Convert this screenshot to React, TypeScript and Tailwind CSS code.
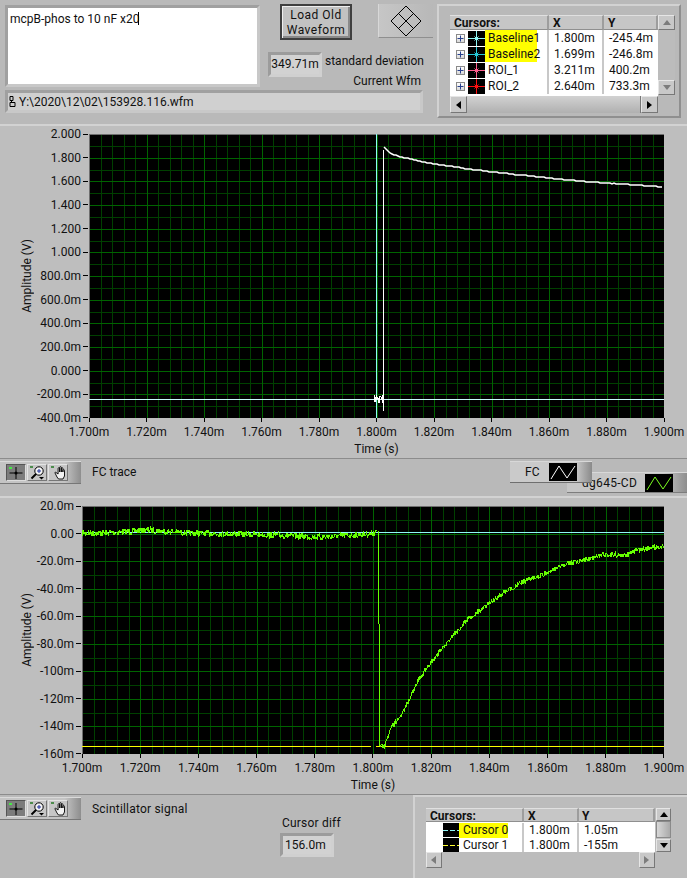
import React from 'react';

type Pt = [number, number];

const rng = (seed: number) => () => {
  seed = (seed * 16807) % 2147483647;
  return seed / 2147483647;
};

// piecewise linear with a bit of jitter, gives the scope-looking trace
const trace = (knots: Pt[], noise: number, seed: number, step = 0.5) => {
  const r = rng(seed);
  const out: string[] = [];
  for (let i = 0; i < knots.length - 1; i++) {
    const [x0, y0] = knots[i];
    const [x1, y1] = knots[i + 1];
    for (let x = x0; x < x1; x += step) {
      const y = y0 + ((y1 - y0) * (x - x0)) / (x1 - x0) + (r() - 0.5) * noise;
      out.push(`${x},${Math.round(y)}`);
    }
  }
  return out.join(' ');
};

const Grid = ({ x, y, w, h, yDiv }: { x: number; y: number; w: number; h: number; yDiv: number }) => {
  const lines = [];
  for (let i = 0; i <= 50; i++) {
    const px = Math.round(x + (w * i) / 50) + 0.5;
    if (i % 5 !== 0) lines.push(<line key={`v${i}`} x1={px} x2={px} y1={y} y2={y + h} stroke="#004000" />);
  }
  for (let i = 1; i < yDiv * 2; i += 2) {
    const py = Math.round(y + (h * i) / (yDiv * 2)) + 0.5;
    lines.push(<line key={`h${i}`} y1={py} y2={py} x1={x} x2={x + w} stroke="#004000" />);
  }
  for (let i = 0; i <= 50; i += 5) {
    const px = Math.round(x + (w * i) / 50) + 0.5;
    lines.push(<line key={`V${i}`} x1={px} x2={px} y1={y} y2={y + h} stroke="#006400" />);
  }
  for (let i = 0; i <= yDiv * 2; i += 2) {
    const py = Math.round(y + (h * i) / (yDiv * 2)) + 0.5;
    lines.push(<line key={`H${i}`} y1={py} y2={py} x1={x} x2={x + w} stroke="#006400" />);
  }
  return (
    <g shapeRendering="crispEdges">
      {lines}
      <path d={`M${x + 0.5} ${y + h}V${y + 0.5}H${x + w}`} fill="none" stroke="#6e6e6e" />
    </g>
  );
};

const xTicks = ['1.700m', '1.720m', '1.740m', '1.760m', '1.780m', '1.800m', '1.820m', '1.840m', '1.860m', '1.880m', '1.900m'];

const Chart = ({ yTicks, labelsW, plotW, plotH, xMargin, vb, children }: {
  yTicks: string[];
  labelsW: string;
  plotW: string;
  plotH: string;
  xMargin: string;
  vb: string;
  children: React.ReactNode;
}) => (
  <div className="mt-[8px] flex flex-col">
    <div className="flex">
      <div className="w-[34px] pl-[20px] flex items-center justify-center shrink-0">
        <span className="[writing-mode:vertical-rl] rotate-180 leading-none">Amplitude (V)</span>
      </div>
      <div className={`${labelsW} ${plotH} flex flex-col justify-between shrink-0 -my-[8px]`}>
        {yTicks.map((t) => (
          <div key={t} className="h-[16px] flex items-center justify-end">
            <span className="leading-none">{t}</span>
            <span className="w-[5px] h-px bg-black ml-[2px] mr-px" />
          </div>
        ))}
      </div>
      <svg viewBox={vb} className={`${plotW} block shrink-0 bg-black`}>
        {children}
      </svg>
    </div>
    <div className={`${xMargin} flex justify-between`}>
      {xTicks.map((t) => (
        <div key={t} className="w-[44px] flex flex-col items-center shrink-0">
          <span className="w-px h-[4px] bg-black" />
          <span className="mt-[2px] leading-[16px] whitespace-nowrap">{t}</span>
        </div>
      ))}
    </div>
    <div className={`${xMargin} text-center leading-[16px] mt-px`}>Time (s)</div>
  </div>
);

const ToolButton = ({ pressed, children }: { pressed?: boolean; children: React.ReactNode }) => (
  <div className={`relative w-[20px] h-[17px] border flex items-center justify-center ${pressed ? 'bg-[#7c7c7c] border-t-[#555] border-l-[#555] border-b-[#ddd] border-r-[#ddd]' : 'bg-[#c6c6c6] border-t-[#e4e4e4] border-l-[#e4e4e4] border-b-[#777] border-r-[#777]'}`}>
    {children}
  </div>
);

const Toolbar = () => (
  <div className="w-[81px] h-[23px] flex items-center gap-[1px] pl-[6px] border-t border-b border-t-[#dadada] border-b-[#777] bg-linear-to-r from-[#c4c4c4] from-80% to-[#8e8e8e] shrink-0">
    <ToolButton pressed>
      <svg width="16" height="14" viewBox="0 0 16 14">
        <rect x="1" y="1" width="3" height="2" fill="#46e846" />
        <path d="M8 1v12M1.500 7h13" stroke="#000" />
        <circle cx="8" cy="7" r="1.500" fill="#000" />
      </svg>
    </ToolButton>
    <ToolButton>
      <svg width="17" height="15" viewBox="0 0 17 15">
        <rect x="1" y="1" width="3" height="2" fill="#4c8c4c" />
        <circle cx="10" cy="6" r="4.200" fill="#f4f4f4" stroke="#000" />
        <path d="M8 6h4M10 4v4" stroke="#1d2f9b" />
        <path d="M7 9l-4.500 4.500" stroke="#000" strokeWidth="2" />
        <path d="M10 12h5l-2.500 2.500z" fill="#000" />
      </svg>
    </ToolButton>
    <ToolButton>
      <svg width="17" height="15" viewBox="0 0 17 15" fill="#f2f2f2" stroke="#000" strokeWidth="0.9">
        <rect x="1" y="1" width="3" height="2" fill="#4c8c4c" stroke="none" />
        <path d="M5 8l2 4 1.500 2h4.500l1.500-3V5.500a.8.8 0 0 0-1.600 0V7V3.500a.8.8 0 0 0-1.600 0V7V2.500a.8.8 0 0 0-1.600 0V7V3.500a.8.8 0 0 0-1.600 0V9L6 7.500C5.300 7 4.600 7.400 5 8z" />
      </svg>
    </ToolButton>
  </div>
);

const Zigzag = ({ color }: { color: string }) => (
  <svg viewBox="0 0 28 18" className="w-[28px] h-[18px] bg-black block shrink-0">
    <polyline points="2,16 10,3 18,15 26,3" fill="none" stroke={color} />
  </svg>
);

const CursorIcon = ({ color }: { color: string }) => (
  <svg width="17" height="15" viewBox="0 0 17 15" className="bg-black block shrink-0" shapeRendering="crispEdges">
    <path d="M0 7.500h17M8.500 0v15" stroke={color} />
    <path d="M6.500 5.500l4 4M10.500 5.500l-4 4" stroke={color} shapeRendering="auto" />
  </svg>
);

const DashIcon = ({ color }: { color: string }) => (
  <svg width="16" height="14" viewBox="0 0 16 14" className="bg-black block shrink-0">
    <path d="M0 7.500h16" stroke={color} strokeDasharray="5 2" />
  </svg>
);

const Expander = () => (
  <span className="w-[9px] h-[9px] border border-[#8a8a8a] bg-linear-to-b from-white to-[#d8d8d8] flex items-center justify-center shrink-0">
    <svg width="7" height="7" viewBox="0 0 7 7">
      <path d="M0.500 3.500h6M3.500 0.500v6" stroke="#27408f" />
    </svg>
  </span>
);

const Arrow = ({ d, gray }: { d: 'u' | 'd' | 'l' | 'r'; gray?: boolean }) => {
  const pts = { u: '1,7 5,2 9,7', d: '1,2 5,7 9,2', l: '7,1 2,5 7,9', r: '2,1 7,5 2,9' }[d];
  return (
    <svg width="10" height="10" viewBox="0 0 10 10">
      <polygon points={pts} fill={gray ? '#7c7c7c' : '#000'} />
    </svg>
  );
};

const scrollBtn = 'bg-[#c8c8c8] border border-t-[#e6e6e6] border-l-[#e6e6e6] border-b-[#777] border-r-[#777] flex items-center justify-center shrink-0';
const headCell = 'h-full bg-[#c6c6c6] border-r-2 border-r-[#9d9d9d] border-t border-t-[#e0e0e0] border-b border-b-[#8f8f8f] font-bold flex items-center leading-none pt-px';

const topRows = [
  { name: 'Baseline1', color: '#8ff7f7', x: '1.800m', y: '-245.4m', hl: true },
  { name: 'Baseline2', color: '#26c9d8', x: '1.699m', y: '-246.8m', hl: true },
  { name: 'ROI_1', color: '#ff5f8f', x: '3.211m', y: '400.2m', hl: false },
  { name: 'ROI_2', color: '#ff1010', x: '2.640m', y: '733.3m', hl: false },
];

const TopCursors = () => (
  <div className="ml-[11px] mt-[9px] w-[225px] h-[98px] flex flex-col shrink-0">
    <div className="flex h-[81px]">
      <div className="w-[208px] flex flex-col shrink-0 bg-white">
        <div className="flex h-[15px] shrink-0">
          <div className={`${headCell} w-[99px] pl-[4px]`}>Cursors:</div>
          <div className={`${headCell} w-[55px] pl-[4px]`}>X</div>
          <div className={`${headCell} w-[54px] pl-[4px]`}>Y</div>
        </div>
        {topRows.map((r) => (
          <div key={r.name} className="flex h-[16px] items-center shrink-0">
            <div className="w-[99px] flex items-center pl-[6px] border-r-2 border-r-[#c8c8c8] h-full">
              <Expander />
              <span className="w-[3px]" />
              <CursorIcon color={r.color} />
              <span className={`h-full w-[52px] pl-[3px] leading-[17px] whitespace-nowrap ${r.hl ? 'bg-[#ffff00]' : ''}`}>{r.name}</span>
            </div>
            <div className="w-[55px] pl-[5px] border-r-2 border-r-[#c8c8c8] h-full leading-[17px]">{r.x}</div>
            <div className="w-[54px] pl-[5px] h-full leading-[17px]">{r.y}</div>
          </div>
        ))}
      </div>
      <div className="w-[17px] flex flex-col justify-between bg-[#bcbcbc]">
        <div className={`${scrollBtn} h-[15px]`}><Arrow d="u" gray /></div>
        <div className={`${scrollBtn} h-[15px] mb-px`}><Arrow d="d" gray /></div>
      </div>
    </div>
    <div className="flex h-[17px] bg-[#bcbcbc] w-[208px]">
      <div className={`${scrollBtn} w-[17px]`}><Arrow d="l" /></div>
      <div className="flex-1 bg-linear-to-b from-[#d2d2d2] to-[#b0b0b0] border-r border-r-[#777]" />
      <div className={`${scrollBtn} w-[17px]`}><Arrow d="r" /></div>
    </div>
  </div>
);

const BottomCursors = () => (
  <div className="ml-[11px] mt-[11px] w-[248px] h-[60px] flex flex-col shrink-0">
    <div className="flex h-[44px]">
      <div className="w-[229px] flex flex-col shrink-0 bg-white overflow-hidden">
        <div className="flex h-[14px] shrink-0">
          <div className={`${headCell} w-[98px] pl-[4px]`}>Cursors:</div>
          <div className={`${headCell} w-[55px] pl-[4px]`}>X</div>
          <div className={`${headCell} w-[76px] pl-[3px] border-r-0`}>Y</div>
        </div>
        <div className="flex h-[15px] shrink-0 mt-px">
          <div className="w-[98px] flex pl-[17px] border-r-2 border-r-[#c8c8c8] h-full">
            <DashIcon color="#8ff7f7" />
            <span className="h-full w-[49px] pl-[4px] leading-[15px] whitespace-nowrap bg-[#ffff00]">Cursor 0</span>
          </div>
          <div className="w-[55px] pl-[5px] border-r-2 border-r-[#c8c8c8] leading-[15px]">1.800m</div>
          <div className="w-[76px] pl-[5px] leading-[15px]">1.05m</div>
        </div>
        <div className="flex h-[14px] shrink-0">
          <div className="w-[98px] flex pl-[17px] border-r-2 border-r-[#c8c8c8] h-full">
            <DashIcon color="#ffff30" />
            <span className="h-full w-[49px] pl-[4px] leading-[14px] whitespace-nowrap">Cursor 1</span>
          </div>
          <div className="w-[55px] pl-[5px] border-r-2 border-r-[#c8c8c8] leading-[14px]">1.800m</div>
          <div className="w-[76px] pl-[5px] leading-[14px]">-155m</div>
        </div>
      </div>
      <div className="w-[15px] flex flex-col bg-[#c0c0c0] ml-[1px]">
        <div className={`${scrollBtn} h-[13px]`}><Arrow d="u" /></div>
        <div className="h-[17px] bg-linear-to-r from-[#d8d8d8] to-[#aaa] border border-[#8a8a8a]" />
        <div className={`${scrollBtn} h-[13px] mt-px`}><Arrow d="d" /></div>
      </div>
    </div>
    <div className="flex h-[16px] bg-[#bcbcbc] w-[229px] justify-between">
      <div className={`${scrollBtn} w-[16px]`}><Arrow d="l" gray /></div>
      <div className={`${scrollBtn} w-[16px]`}><Arrow d="r" gray /></div>
    </div>
  </div>
);

const App = () => {
  const frame = 'border-[3px] border-t-[#9c9c9c] border-l-[#9c9c9c] border-b-[#d0d0d0] border-r-[#d0d0d0]';
  return (
    <div className="w-[687px] h-[878px] overflow-hidden bg-[#b9b9b9] text-[#111] text-[12px] font-['Roboto',sans-serif] flex flex-col relative">
      {/* front panel top */}
      <div className="h-[124px] flex shrink-0">
        <div className="ml-[5px] mt-[4px] w-[432px] shrink-0 flex flex-col">
          <div className="flex h-[83px]">
            <div className="w-[255px] h-[82px] mt-px bg-white shrink-0 border-[3px] border-t-[#a0a0a0] border-l-[#a0a0a0] border-b-[#c8c8c8] border-r-[#c8c8c8] pl-[2px] pt-[3px] leading-[16px]">
              mcpB-phos to 10 nF x20<span className="inline-block w-px h-[13px] bg-black align-[-2px] -ml-px" />
            </div>
            <div className="flex flex-col">
              <div className="flex">
                <div className="ml-[20px] w-[72px] h-[36px] border-2 border-[#3f3f3f] bg-[#c2c2c2] shadow-[inset_1px_1px_0_#eee,inset_-2px_-2px_0_#8a8a8a] text-center leading-[15px] pt-[2px] tracking-[0.5px]">
                  Load Old<br />Waveform
                </div>
                <div className="ml-[26px] w-[55px] h-[34px] bg-linear-to-r from-[#c6c6c6] to-[#b8b8b8] border-l border-l-[#d8d8d8] border-b border-b-[#8f8f8f] flex items-center justify-center">
                  <svg width="32" height="32" viewBox="0 0 32 32">
                    <path d="M16 1L31 16L16 31L1 16ZM8.500 8.500L23.500 23.500M23.500 8.500L8.500 23.500" fill="none" stroke="#000" />
                  </svg>
                </div>
              </div>
              <div className="flex items-center mt-[12px]">
                <div className={`ml-[8px] w-[54px] h-[25px] ${frame} bg-[#d2d2d2] text-center leading-[19px]`}>349.71m</div>
                <span className="ml-[3px] -mt-[8px] whitespace-nowrap">standard deviation</span>
              </div>
              <div className="w-[161px] text-right -mt-[3px] leading-[14px] whitespace-nowrap">Current Wfm</div>
            </div>
          </div>
          <div className="mt-[3px] w-[418px] h-[23px] border-[3px] border-t-[#a0a0a0] border-l-[#a0a0a0] border-b-[#c8c8c8] border-r-[#c8c8c8] bg-[#d0d0d0] flex items-center pl-px leading-none">
            <svg width="7" height="11" viewBox="0 0 7 11" className="shrink-0 mr-[3px]">
              <path d="M1 .5h3v4h-3zM1 6.500h5v4h-5zM2.500 4.500v2" fill="none" stroke="#000" />
            </svg>
            Y:\2020\12\02\153928.116.wfm
          </div>
        </div>
        <div className="mt-[4px] w-[244px] h-[114px] border-2 border-t-[#d2d2d2] border-l-[#d2d2d2] border-b-[#8f8f8f] border-r-[#8f8f8f] shrink-0">
          <TopCursors />
        </div>
      </div>

      {/* FC trace graph */}
      <div className="h-[335px] shrink-0 bg-[#bebebe] border-t-2 border-t-[#d2d2d2] border-b border-b-[#8c8c8c]">
        <Chart
          labelsW="w-[55px]"
          plotW="w-[575px] h-[284px]"
          plotH="h-[300px]"
          xMargin="ml-[67px] w-[619px]"
          vb="89 134 575 284"
          yTicks={['2.000', '1.800', '1.600', '1.400', '1.200', '1.000', '800.0m', '600.0m', '400.0m', '200.0m', '0.000', '-200.0m', '-400.0m']}
        >
          <Grid x={89} y={134} w={575} h={284} yDiv={12} />
          <g shapeRendering="crispEdges" fill="none">
            <line x1="89" x2="664" y1="399.500" y2="399.500" stroke="#c8fbfb" />
            <path d="M376.500 134v284" stroke="#8ff7f7" />
            <path d="M383.500 150v261" stroke="#ffffff" />
            <polyline points={trace([[374, 399], [384, 399]], 9, 5)} stroke="#fff" />
          </g>
          <polyline
            points={trace([[384, 147], [390, 153], [400, 157], [410, 159], [423, 162], [440, 165], [457, 167], [469, 169], [520, 175], [580, 181], [620, 184], [664, 187]], 0.4, 11, 2)}
            fill="none"
            stroke="#fff"
            strokeWidth="1.500"
          />
        </Chart>
      </div>

      {/* graph palette strip + legends */}
      <div className="h-[37px] shrink-0 relative bg-[#b9b9b9] pt-[2px] flex">
        <Toolbar />
        <span className="ml-[11px] mt-[3px] leading-[16px]">FC trace</span>
        <div className="absolute left-[567px] top-[13px] w-[120px] h-[21px] flex items-center bg-linear-to-r from-[#c6c6c6] from-80% to-[#8e8e8e] border-t border-t-[#d8d8d8] border-b border-b-[#7d7d7d]">
          <span className="ml-[15px] w-[63px] tracking-[0.3px]">dg645-CD</span>
          <Zigzag color="#7cff20" />
        </div>
        <div className="absolute left-[510px] top-[2px] w-[82px] h-[22px] flex items-center bg-linear-to-r from-[#cacaca] from-80% to-[#8a8a8a] border-t border-t-[#d8d8d8] border-b border-b-[#6f6f6f]">
          <span className="ml-[15px] w-[24px]">FC</span>
          <Zigzag color="#ffffff" />
        </div>
      </div>

      {/* scintillator graph */}
      <div className="h-[299px] shrink-0 bg-[#bebebe] border-t-2 border-t-[#d2d2d2] border-b border-b-[#8c8c8c]">
        <Chart
          labelsW="w-[48px]"
          plotW="w-[582px] h-[248px]"
          plotH="h-[264px]"
          xMargin="ml-[60px] w-[626px]"
          vb="82 506 582 248"
          yTicks={['20.0m', '0.00', '-20.0m', '-40.0m', '-60.0m', '-80.0m', '-100m', '-120m', '-140m', '-160m']}
        >
          <Grid x={82} y={506} w={582} h={248} yDiv={9} />
          <g shapeRendering="crispEdges" fill="none">
            <line x1="82" x2="664" y1="532.500" y2="532.500" stroke="#8ff7f7" />
            <path d="M82 746.500h289M376 746.500h288" stroke="#ffff00" />
            <polyline points={trace([[82, 533], [100, 533], [150, 530], [190, 533], [250, 534], [320, 537], [370, 534], [377, 531]], 6, 7)} stroke="#66ff00" />
            <path d="M378.500 531v93M379.500 624v122" stroke="#66ff00" />
            <polyline points={trace([[379, 746], [385, 746], [390, 730], [403, 712], [420, 677], [437, 655], [453, 635], [470, 617], [487, 605], [503, 593], [520, 583], [537, 577], [553, 569], [570, 563], [587, 559], [603, 554], [627, 555], [637, 550], [664, 546]], 5, 23)} stroke="#66ff00" />
          </g>
        </Chart>
      </div>

      {/* bottom strip */}
      <div className="flex-1 flex">
        <div className="w-[280px] shrink-0 pt-[2px] flex items-start">
          <Toolbar />
          <span className="ml-[11px] mt-[4px] leading-[16px] tracking-[0.2px] whitespace-nowrap">Scintillator signal</span>
        </div>
        <div className="w-[133px] shrink-0 pt-[20px]">
          <div className="pl-[2px] leading-[16px] tracking-[0.2px]">Cursor diff</div>
          <div className={`mt-[2px] w-[54px] h-[24px] ${frame} bg-[#d2d2d2] pl-[2px] leading-[18px]`}>156.0m</div>
        </div>
        <div className="flex-1 border-l-2 border-t-2 border-l-[#d2d2d2] border-t-[#d2d2d2] bg-[#bcbcbc]">
          <BottomCursors />
        </div>
      </div>
    </div>
  );
};

export default App;
